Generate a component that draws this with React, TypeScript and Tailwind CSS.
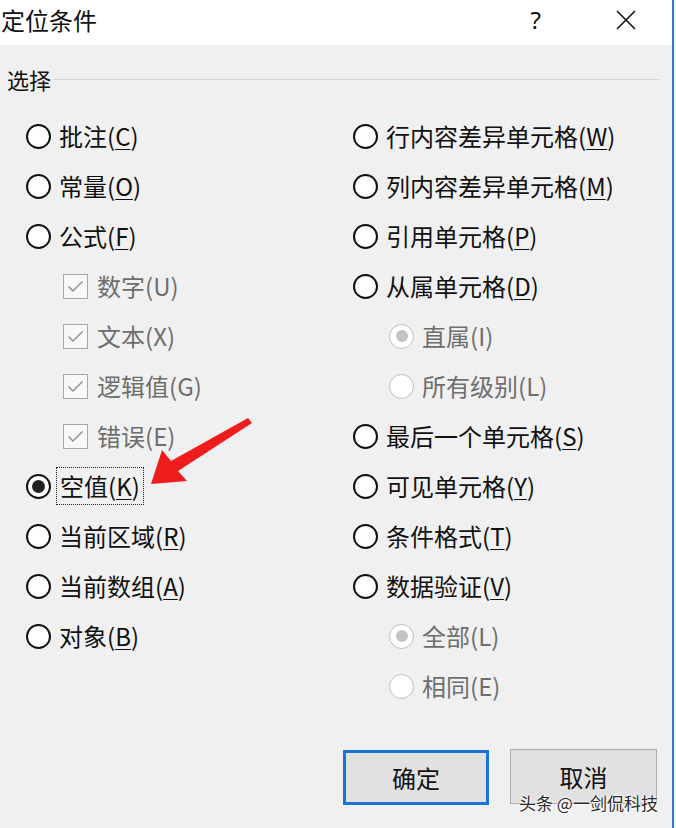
import React from "react";

const FONT = "font-['Microsoft_YaHei','Noto_Sans_CJK_SC','Noto_Sans',sans-serif]";

function Radio({ checked = false, disabled = false }: { checked?: boolean; disabled?: boolean }) {
  if (disabled) {
    return (
      <div className="w-[25px] h-[25px] rounded-full border-[1.5px] border-[#bdbdbd] bg-white flex items-center justify-center shrink-0">
        {checked && <div className="w-[12px] h-[12px] rounded-full bg-[#c4c4c4]" />}
      </div>
    );
  }
  return (
    <div className="w-[25px] h-[25px] rounded-full border-2 border-[#111] bg-white flex items-center justify-center shrink-0">
      {checked && <div className="w-[13px] h-[13px] rounded-full bg-[#222]" />}
    </div>
  );
}

function Check() {
  return (
    <div className="w-[25px] h-[25px] border border-[#a8a8a8] bg-[#f8f8f8] flex items-center justify-center shrink-0">
      <svg width="17" height="13" viewBox="0 0 17 13">
        <path d="M1.5 6.5 L6 11 L15.5 1.5" fill="none" stroke="#8c8c8c" strokeWidth="1.4" />
      </svg>
    </div>
  );
}

function Label({ text, k, disabled = false }: { text: string; k: string; disabled?: boolean }) {
  return (
    <span className={disabled ? "text-[#6e6e6e]" : "text-[#111]"}>
      {text}(
      {disabled ? k : <span className="underline underline-offset-[3px] decoration-1">{k}</span>})
    </span>
  );
}

type Item =
  | { kind: "radio"; text: string; k: string; checked?: boolean; focus?: boolean }
  | { kind: "check"; text: string; k: string }
  | { kind: "subradio"; text: string; k: string; checked?: boolean };

function Row({ item }: { item: Item }) {
  if (item.kind === "radio") {
    return (
      <div className="h-[50px] flex items-center">
        <Radio checked={item.checked} />
        <div
          className={
            item.focus
              ? "ml-[5px] px-[3px] py-[6px] border border-dotted border-[#222] leading-none"
              : "ml-[8px] leading-none"
          }
        >
          <Label text={item.text} k={item.k} />
        </div>
      </div>
    );
  }
  if (item.kind === "check") {
    return (
      <div className="h-[50px] flex items-center pl-[37px]">
        <Check />
        <div className="ml-[9px] leading-none">
          <Label text={item.text} k={item.k} disabled />
        </div>
      </div>
    );
  }
  return (
    <div className="h-[50px] flex items-center pl-[36px]">
      <Radio checked={item.checked} disabled />
      <div className="ml-[8px] leading-none">
        <Label text={item.text} k={item.k} disabled />
      </div>
    </div>
  );
}

const left: Item[] = [
  { kind: "radio", text: "批注", k: "C" },
  { kind: "radio", text: "常量", k: "O" },
  { kind: "radio", text: "公式", k: "F" },
  { kind: "check", text: "数字", k: "U" },
  { kind: "check", text: "文本", k: "X" },
  { kind: "check", text: "逻辑值", k: "G" },
  { kind: "check", text: "错误", k: "E" },
  { kind: "radio", text: "空值", k: "K", checked: true, focus: true },
  { kind: "radio", text: "当前区域", k: "R" },
  { kind: "radio", text: "当前数组", k: "A" },
  { kind: "radio", text: "对象", k: "B" },
];

const right: Item[] = [
  { kind: "radio", text: "行内容差异单元格", k: "W" },
  { kind: "radio", text: "列内容差异单元格", k: "M" },
  { kind: "radio", text: "引用单元格", k: "P" },
  { kind: "radio", text: "从属单元格", k: "D" },
  { kind: "subradio", text: "直属", k: "I", checked: true },
  { kind: "subradio", text: "所有级别", k: "L" },
  { kind: "radio", text: "最后一个单元格", k: "S" },
  { kind: "radio", text: "可见单元格", k: "Y" },
  { kind: "radio", text: "条件格式", k: "T" },
  { kind: "radio", text: "数据验证", k: "V" },
  { kind: "subradio", text: "全部", k: "L", checked: true },
  { kind: "subradio", text: "相同", k: "E" },
];

export default function App() {
  return (
    <div className={`w-[676px] h-[828px] flex bg-white overflow-hidden relative ${FONT}`}>
      <div className="w-[672px] h-full flex flex-col">
        {/* title bar */}
        <div className="h-[45px] bg-white flex items-center shrink-0">
          <div className="ml-[1px] text-[24px] leading-none text-[#111] -mt-[6px]">定位条件</div>
          <div className="ml-auto text-[24px] leading-none text-[#111] -mt-[6px] mr-[75px] font-['Noto_Sans',sans-serif]">?</div>
          <div className="mr-[36px] -mt-[6px]">
            <svg width="20" height="20" viewBox="0 0 20 20">
              <path d="M1 1 L19 19 M19 1 L1 19" stroke="#111" strokeWidth="1.6" fill="none" />
            </svg>
          </div>
        </div>
        {/* body */}
        <div className="flex-1 bg-[#f0f0f0] flex flex-col">
          <div className="mt-[23px] flex items-center pl-[7px] pr-[13px] h-[22px]">
            <span className="text-[22px] leading-none text-[#111]">选择</span>
            <div className="flex-1 h-px bg-[#d5d5d5] ml-[2px]" />
          </div>
          <div className="mt-[21px] grid grid-cols-[327px_1fr] pl-[26px] text-[24px]">
            <div className="flex flex-col">
              {left.map((it, i) => (
                <Row key={i} item={it} />
              ))}
            </div>
            <div className="flex flex-col">
              {right.map((it, i) => (
                <Row key={i} item={it} />
              ))}
            </div>
          </div>
          <div className="mt-[38px] flex pl-[343px] gap-[21px]">
            <div className="w-[146px] h-[55px] border-[3px] border-[#1a73d6] bg-[#e1e1e1] flex items-center justify-center text-[24px] text-[#111] mt-px">
              确定
            </div>
            <div className="w-[147px] h-[55px] border border-[#adadad] bg-[#e1e1e1] flex items-center justify-center text-[24px] text-[#111]">
              取消
            </div>
          </div>
        </div>
      </div>
      <div className="w-[2px] h-full bg-[#2a78d2]" />
      <div className="w-[2px] h-full bg-[#f5f5f5]" />

      {/* red arrow annotation */}
      <svg className="absolute left-0 top-0 pointer-events-none" width="676" height="828">
        <polygon
          points="151,484 162,450 171,461 248,418 252,423 178,471 187,481"
          fill="#ee1c1c"
        />
      </svg>

      {/* watermark */}
      <div className="absolute left-[519px] top-[794px] text-[17px] leading-none text-[#2a2a2a] [text-shadow:0_0_2px_#fff,0_0_2px_#fff,0_0_3px_#fff]">
        头条 @一剑侃科技
      </div>
    </div>
  );
}
